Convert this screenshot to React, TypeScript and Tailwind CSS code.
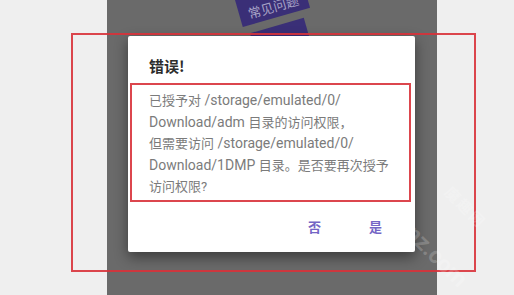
import React from "react";

const C = ({ children }: { children: React.ReactNode }) => (
  <span className="text-[13px]">{children}</span>
);

export default function App() {
  const font = { fontFamily: 'Roboto, "Noto Sans CJK SC", sans-serif' };
  return (
    <div className="relative w-[514px] h-[295px] overflow-hidden bg-[#efefef]" style={font}>
      {/* background page */}
      <div className="flex h-full">
        <div className="w-[107px] shrink-0" />
        <div className="relative w-[330px] h-full bg-[#6a6a6a] overflow-hidden">
          {/* tilted purple buttons (dimmed by the overlay) */}
          <div className="absolute left-[130px] top-[-14px] w-[70px] h-[32px] bg-[#3a2f77] rotate-[-16deg] flex items-center justify-center pt-[10px]">
            <span className="text-[13px] leading-[16px] text-[#a7a2c6]" style={{ fontFamily: '"Noto Sans CJK SC", sans-serif' }}>
              常见问题
            </span>
          </div>
          <div className="absolute left-[146px] top-[25px] w-[56px] h-[30px] bg-[#3a2f77] rotate-[-16deg]" />
        </div>
        <div className="flex-1" />
      </div>

      {/* dialog */}
      <div className="absolute left-[128px] top-[36px] w-[287px] h-[216px] bg-white rounded-[2px] shadow-[0_5px_14px_rgba(0,0,0,0.45)] flex flex-col">
        <div className="pl-[21px] pt-[20px] flex flex-col gap-[14px]">
          <div
            className="text-[15px] leading-[20px] font-bold text-[#2d2d2d]"
            style={{ fontFamily: '"Noto Sans CJK SC", sans-serif' }}
          >
            错误!
          </div>
          <div className="text-[14px] leading-[21.6px] text-[#7b7b7b]">
            <C>已授予对</C> /storage/emulated/0/
            <br />
            Download/adm <C>目录的访问权限，</C>
            <br />
            <C>但需要访问</C> /storage/emulated/0/
            <br />
            Download/1DMP <C>目录。是否要再次授予</C>
            <br />
            <C>访问权限?</C>
          </div>
        </div>
        <div
          className="mt-auto pb-[16px] pr-[33px] flex justify-end gap-[48px] text-[13px] leading-[18px] font-bold text-[#7465c5]"
          style={{ fontFamily: '"Noto Sans CJK SC", sans-serif' }}
        >
          <span>否</span>
          <span>是</span>
        </div>
      </div>

      {/* annotation rectangles */}
      <div className="absolute left-[71px] top-[33px] w-[405px] h-[239px] border-2 border-[#d8323a]/90" />
      <div className="absolute left-[130px] top-[83px] w-[281px] h-[119px] border-2 border-[#d8323a]/90" />

      {/* watermark */}
      <div className="absolute left-[440px] top-[196px] rotate-[45deg] text-[15px] font-bold text-white/20 tracking-[2px]" style={{ fontFamily: '"Noto Sans CJK SC", sans-serif' }}>
        魔趣网
      </div>
      <div className="absolute left-[380px] top-[232px] rotate-[45deg] text-[23px] font-bold text-white/20">
        funz.com
      </div>
    </div>
  );
}
